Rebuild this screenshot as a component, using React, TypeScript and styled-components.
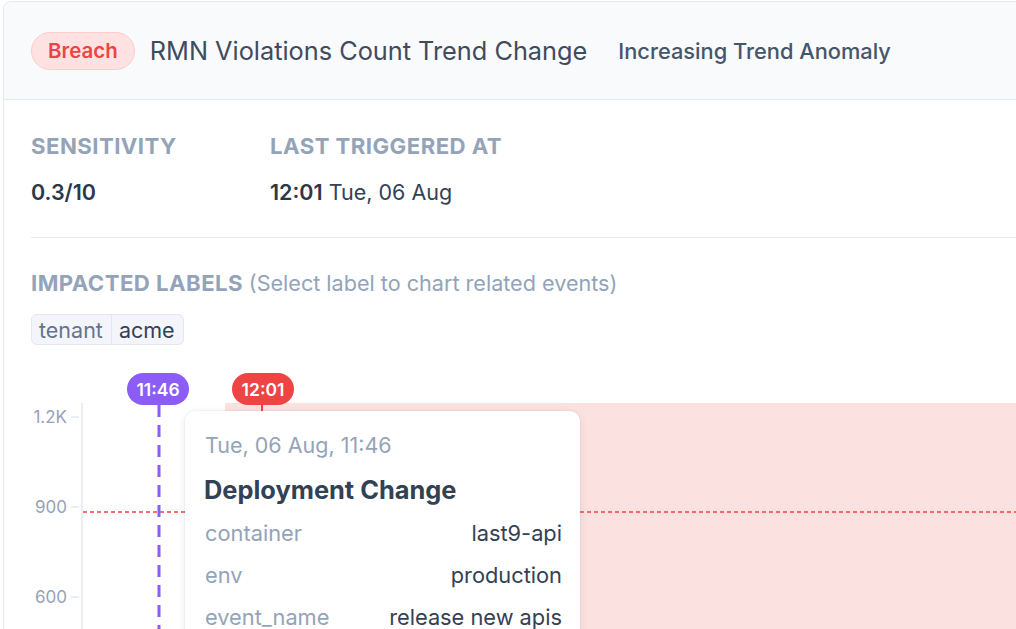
import React from "react";
import styled, { createGlobalStyle } from "styled-components";

const Global = createGlobalStyle`
  html, body { margin: 0; padding: 0; background: #ffffff; overflow: hidden; }
  body { font-family: Inter, "Noto Sans", sans-serif; -webkit-font-smoothing: antialiased; }
  * { box-sizing: border-box; }
`;

const Page = styled.div`
  padding: 1px 0 0 3px;
  width: 1016px;
  height: 629px;
  overflow: hidden;
`;

const Card = styled.div`
  width: 1080px;
  height: 700px;
  border: 1px solid #e5e9f0;
  border-top-left-radius: 8px;
  background: #ffffff;
  overflow: hidden;
`;

const Header = styled.div`
  height: 98px;
  background: #f8fafc;
  border-bottom: 1px solid #e5e9f0;
  display: flex;
  align-items: center;
  padding-left: 27px;
  gap: 15px;
`;

const Badge = styled.span`
  display: inline-flex;
  align-items: center;
  height: 38px;
  padding: 0 16px;
  border-radius: 19px;
  background: #fee2e2;
  border: 1px solid #fecaca;
  color: #ef4444;
  font-size: 20.5px;
  font-weight: 600;
`;

const Title = styled.h1`
  margin: 0;
  font-size: 25.3px;
  font-weight: 400;
  color: #3f4b5e;
`;

const Subtitle = styled.span`
  margin-left: 16px;
  font-size: 21.8px;
  font-weight: 500;
  color: #475569;
`;

const Body = styled.div`
  padding: 32px 0 0 27px;
`;

const Stats = styled.div`
  display: grid;
  grid-template-columns: 239px auto;
  justify-content: start;
`;

const Stat = styled.div`
  display: flex;
  flex-direction: column;
  gap: 18px;
`;

const Label = styled.div`
  font-size: 22.2px;
  line-height: 28px;
  font-weight: 700;
  letter-spacing: 0.02em;
  text-transform: uppercase;
  color: #94a3b8;
`;

const LabelNote = styled.span`
  font-weight: 400;
  font-size: 21.6px;
  text-transform: none;
  letter-spacing: 0;
`;

const Value = styled.div`
  font-size: 21.5px;
  line-height: 28px;
  font-weight: 400;
  color: #334155;
`;

const Strong = styled.strong`
  font-weight: 600;
  color: #2d3748;
`;

const Divider = styled.hr`
  margin: 31px 0 31px;
  border: 0;
  border-top: 1px solid #e5e9f0;
`;

const Tag = styled.div`
  margin-top: 17px;
  display: inline-flex;
  height: 31px;
  border: 1px solid #e2e6f0;
  background: #f4f5fb;
  border-radius: 6px;
  overflow: hidden;
`;

const TagPart = styled.span<{ $key?: boolean }>`
  display: flex;
  align-items: center;
  padding: 0 8px 0 7px;
  font-size: 21.5px;
  color: ${(p) => (p.$key ? "#64748b" : "#334155")};
  border-right: ${(p) => (p.$key ? "1px solid #e2e6f0" : "none")};
`;

const Chart = styled.div`
  position: relative;
  margin-top: 20px;
  height: 300px;
  width: 1100px;
`;

const ChartSvg = styled.svg`
  position: absolute;
  left: 0;
  top: 0;
`;

const YLabels = styled.div`
  position: absolute;
  left: 0;
  top: 40px;
  width: 36px;
  display: flex;
  flex-direction: column;
  align-items: flex-end;
  gap: 66px;
`;

const YLabel = styled.span`
  font-size: 17px;
  line-height: 24px;
  color: #94a3b8;
`;

const Marker = styled.div<{ $color: string; $x: number }>`
  position: absolute;
  top: 8px;
  left: ${(p) => p.$x}px;
  height: 32px;
  width: 62px;
  border-radius: 16px;
  background: ${(p) => p.$color};
  color: #ffffff;
  font-size: 17.5px;
  font-weight: 600;
  display: flex;
  align-items: center;
  justify-content: center;
`;

const Tooltip = styled.div`
  position: absolute;
  left: 154px;
  top: 46px;
  width: 395px;
  height: 280px;
  background: #ffffff;
  border-radius: 10px;
  box-shadow: 0 2px 10px rgba(15, 23, 42, 0.08), 0 0 0 1px rgba(15, 23, 42, 0.03);
  padding: 22px 18px 0 20px;
  display: flex;
  flex-direction: column;
`;

const TipDate = styled.div`
  font-size: 21.5px;
  line-height: 24px;
  color: #94a3b8;
`;

const TipTitle = styled.div`
  margin: 18px 0 7px -1px;
  font-size: 25.4px;
  line-height: 30px;
  font-weight: 700;
  color: #334155;
`;

const TipRow = styled.div`
  height: 42px;
  display: flex;
  align-items: center;
  justify-content: space-between;
  font-size: 21.8px;
`;

const TipKey = styled.span`
  color: #94a3b8;
`;

const TipVal = styled.span`
  color: #334155;
`;

export default function App() {
  const rows: [string, string][] = [
    ["container", "last9-api"],
    ["env", "production"],
    ["event_name", "release new apis"],
  ];
  return (
    <Page>
      <Global />
      <Card>
        <Header>
          <Badge>Breach</Badge>
          <Title>RMN Violations Count Trend Change</Title>
          <Subtitle>Increasing Trend Anomaly</Subtitle>
        </Header>
        <Body>
          <Stats>
            <Stat>
              <Label>Sensitivity</Label>
              <Value>
                <Strong>0.3/10</Strong>
              </Value>
            </Stat>
            <Stat>
              <Label>Last Triggered At</Label>
              <Value>
                <Strong>12:01</Strong> Tue, 06 Aug
              </Value>
            </Stat>
          </Stats>
          <Divider />
          <Label>
            Impacted Labels <LabelNote>(Select label to chart related events)</LabelNote>
          </Label>
          <Tag>
            <TagPart $key>tenant</TagPart>
            <TagPart>acme</TagPart>
          </Tag>
          <Chart>
            <ChartSvg width="1100" height="300" viewBox="0 0 1100 300">
              <rect x="194" y="38" width="906" height="262" fill="#fce1e1" />
              <line x1="51" y1="38" x2="51" y2="300" stroke="#e5e7eb" strokeWidth="1.5" />
              <line x1="40" y1="52" x2="48" y2="52" stroke="#e2e8f0" strokeWidth="1.5" />
              <line x1="40" y1="142" x2="48" y2="142" stroke="#e2e8f0" strokeWidth="1.5" />
              <line x1="40" y1="232" x2="48" y2="232" stroke="#e2e8f0" strokeWidth="1.5" />
              <line x1="52" y1="147" x2="1100" y2="147" stroke="#ef4444" strokeWidth="1.5" strokeDasharray="4 3" />
              <line x1="128" y1="40" x2="128" y2="300" stroke="#8b5cf6" strokeWidth="3" strokeDasharray="12 8" />
              <line x1="231" y1="40" x2="231" y2="46" stroke="#ef4444" strokeWidth="2" />
            </ChartSvg>
            <YLabels>
              <YLabel>1.2K</YLabel>
              <YLabel>900</YLabel>
              <YLabel>600</YLabel>
            </YLabels>
            <Marker $color="#8b5cf6" $x={96}>11:46</Marker>
            <Marker $color="#ef4444" $x={201}>12:01</Marker>
            <Tooltip>
              <TipDate>Tue, 06 Aug, 11:46</TipDate>
              <TipTitle>Deployment Change</TipTitle>
              {rows.map(([k, v]) => (
                <TipRow key={k}>
                  <TipKey>{k}</TipKey>
                  <TipVal>{v}</TipVal>
                </TipRow>
              ))}
            </Tooltip>
          </Chart>
        </Body>
      </Card>
    </Page>
  );
}
